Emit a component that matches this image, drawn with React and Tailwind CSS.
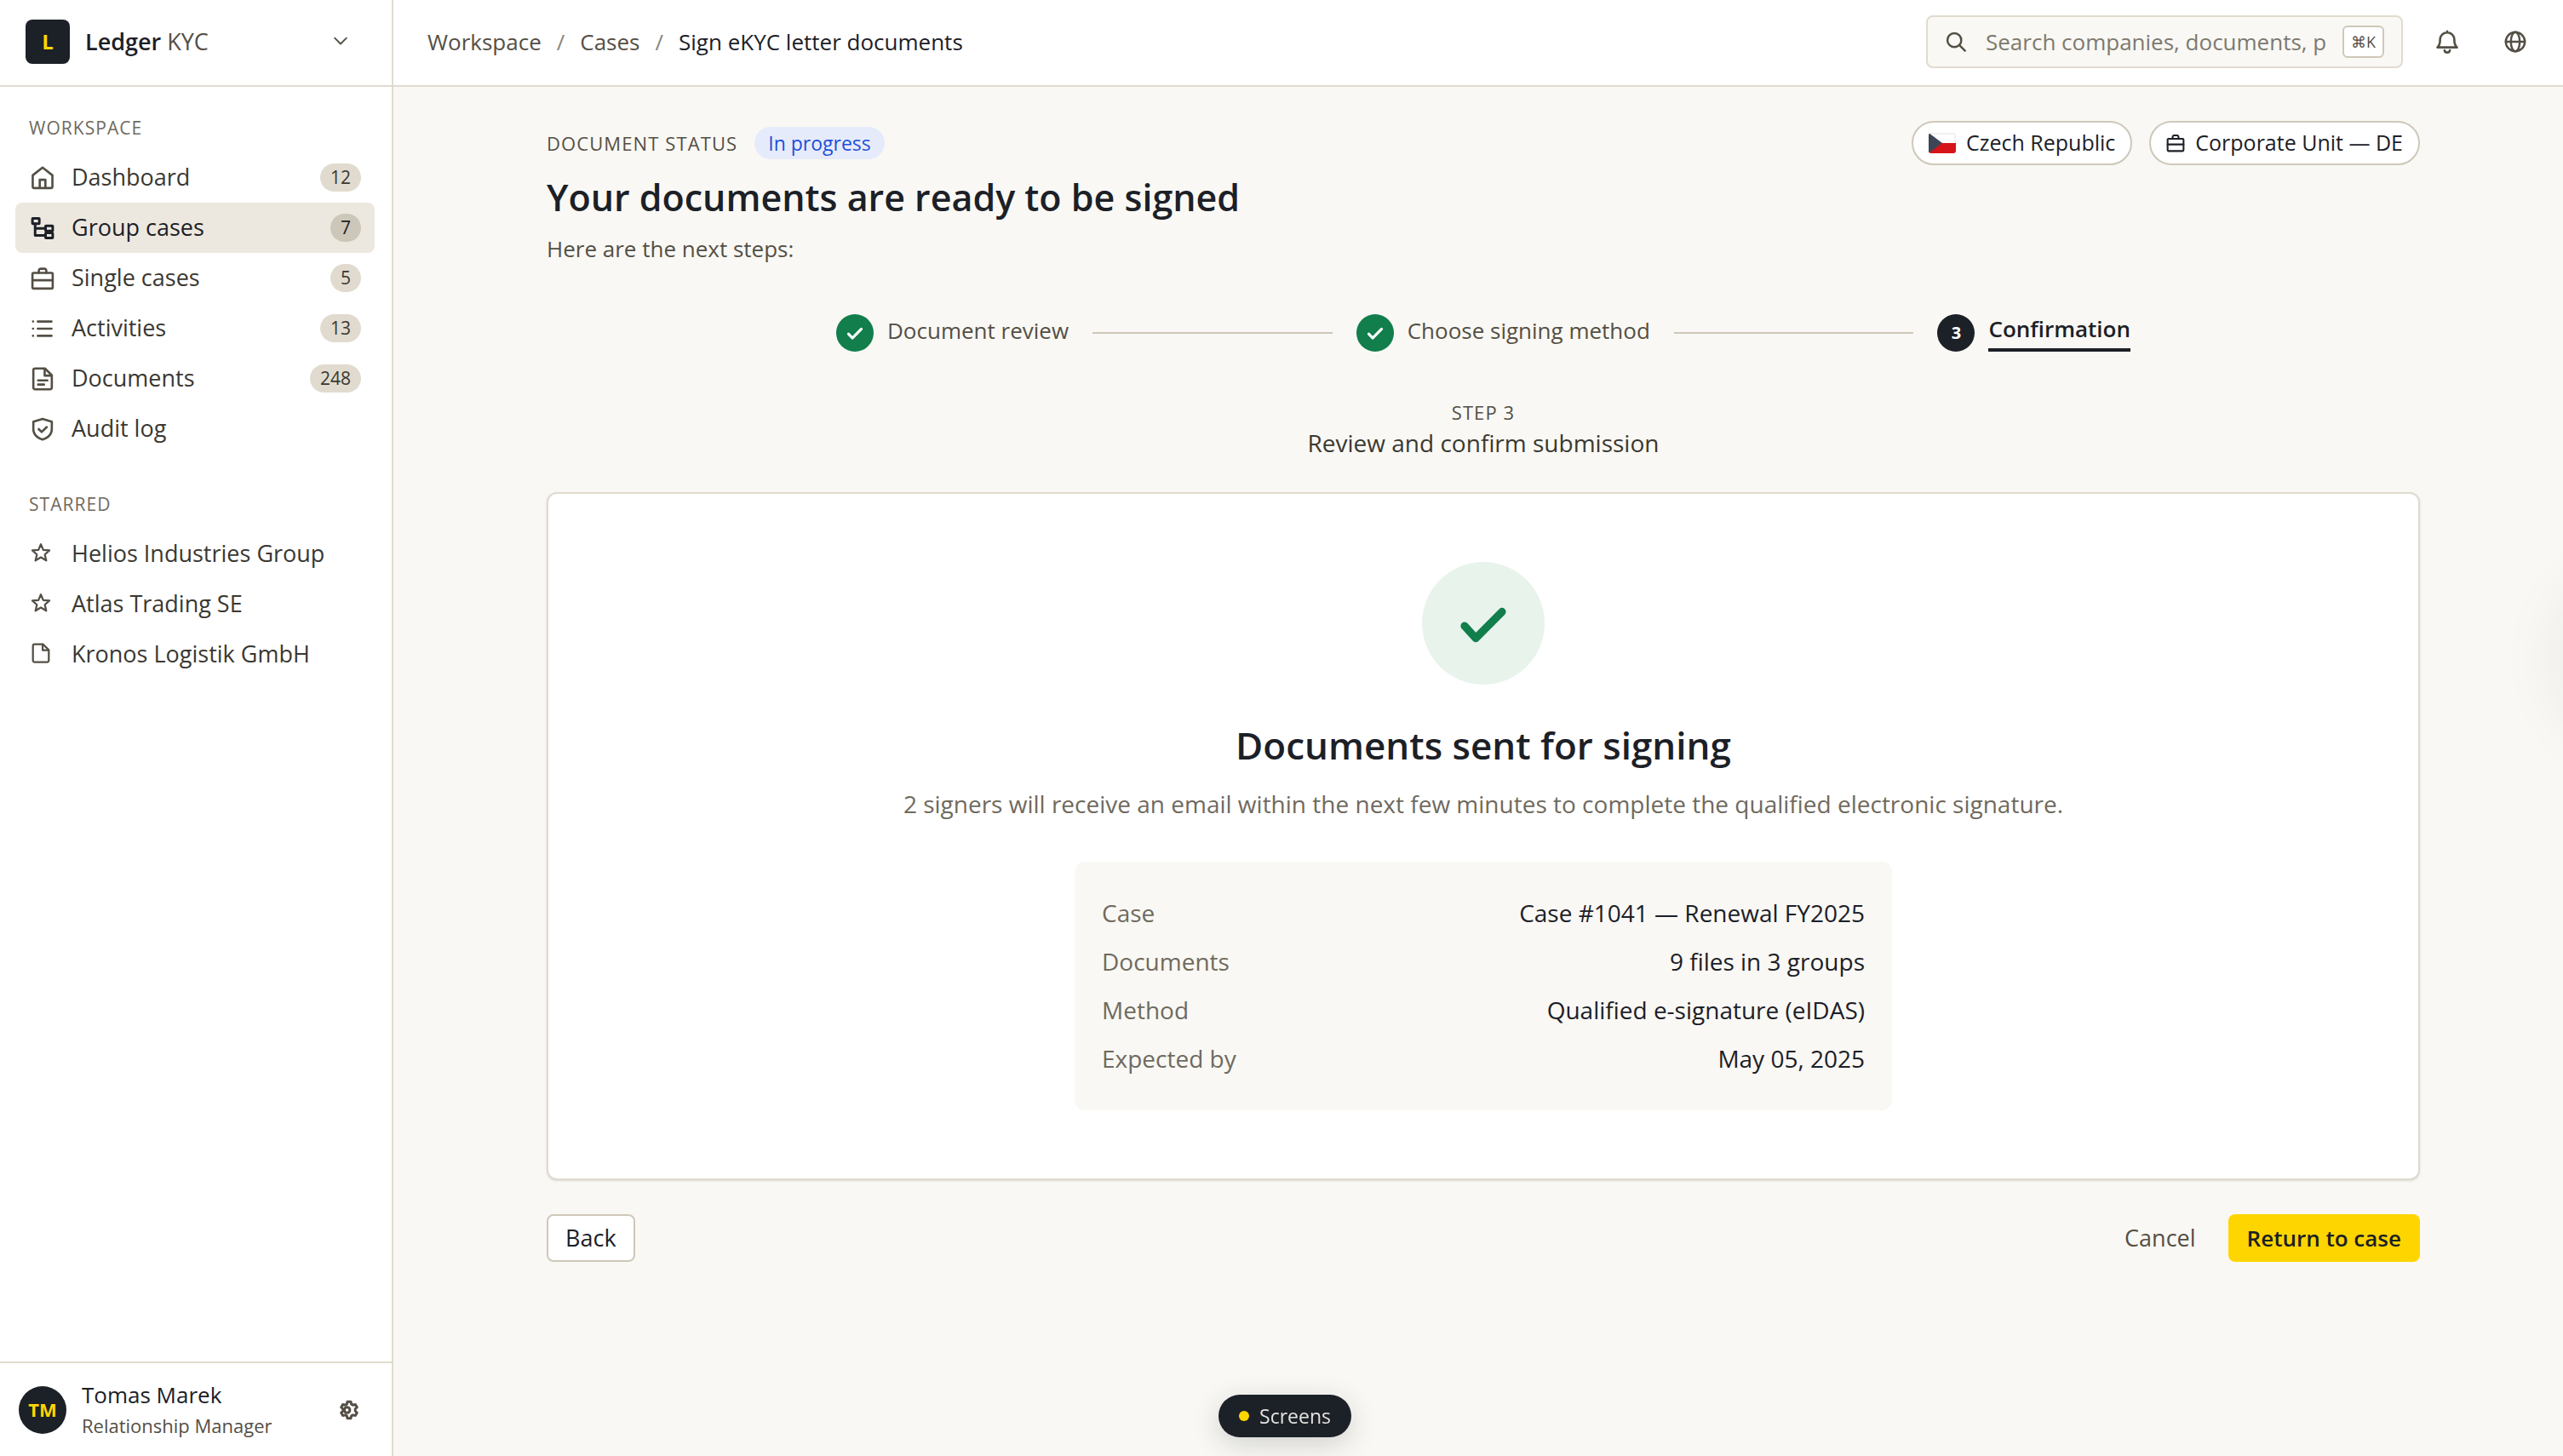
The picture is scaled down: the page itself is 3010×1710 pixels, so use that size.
import { Fragment } from 'react';

const workspaceLinks = [
  { label: 'Dashboard', icon: HomeIcon, count: 12 },
  { label: 'Group cases', icon: TreeIcon, count: 7, active: true },
  { label: 'Single cases', icon: BriefcaseIcon, count: 5 },
  { label: 'Activities', icon: ListIcon, count: 13 },
  { label: 'Documents', icon: DocumentIcon, count: 248 },
  { label: 'Audit log', icon: ShieldIcon },
];

const starredLinks = [
  { label: 'Helios Industries Group', icon: StarIcon },
  { label: 'Atlas Trading SE', icon: StarIcon },
  { label: 'Kronos Logistik GmbH', icon: FileIcon },
];

const steps = [
  { label: 'Document review', done: true },
  { label: 'Choose signing method', done: true },
  { label: 'Confirmation', current: true },
];

const summary = [
  ['Case', 'Case #1041 — Renewal FY2025'],
  ['Documents', '9 files in 3 groups'],
  ['Method', 'Qualified e-signature (eIDAS)'],
  ['Expected by', 'May 05, 2025'],
];

function Icon({ className = 'size-7', strokeWidth = 1.5, children }) {
  return (
    <svg
      viewBox="0 0 16 16"
      fill="none"
      stroke="currentColor"
      strokeWidth={strokeWidth}
      strokeLinecap="round"
      strokeLinejoin="round"
      aria-hidden="true"
      className={`shrink-0 ${className}`}
    >
      {children}
    </svg>
  );
}

function HomeIcon(props) {
  return (
    <Icon {...props}>
      <path d="M1.4 6.2 8 1l6.6 5.2v7.600a1 1 0 0 1-1 1H2.400a1 1 0 0 1-1-1z" />
      <path d="M6.100 14.600V9.200h3.800v5.400" />
    </Icon>
  );
}

function TreeIcon(props) {
  return (
    <Icon strokeWidth={1.7} {...props}>
      <rect x="1.200" y="1.400" width="4.600" height="3.600" rx=".3" />
      <rect x="10" y="6.400" width="4.800" height="3.400" rx=".3" />
      <rect x="10" y="11.200" width="4.800" height="3.400" rx=".3" />
      <path d="M3 5v7.900h7M3 8.200h7" />
    </Icon>
  );
}

function BriefcaseIcon(props) {
  return (
    <Icon {...props}>
      <rect x="1.200" y="4.300" width="13.600" height="10.500" rx=".8" />
      <path d="M5.500 4.300V2.800a1.300 1.300 0 0 1 1.300-1.300h2.400a1.300 1.300 0 0 1 1.300 1.300v1.500M1.200 9.200h13.600" />
    </Icon>
  );
}

function ListIcon(props) {
  return (
    <Icon {...props}>
      <path d="M4.800 3.200h9.200M4.800 8h9.200M4.800 12.800h9.200M1.600 3.200h.01M1.600 8h.01M1.600 12.800h.01" />
    </Icon>
  );
}

function FileIcon(props) {
  return (
    <Icon {...props}>
      <path d="M9.600 1H3a1.200 1.200 0 0 0-1.200 1.200v11.600A1.200 1.200 0 0 0 3 15h10a1.200 1.200 0 0 0 1.200-1.200V5.600z" />
      <path d="M9.400 1.200v4.600h4.600" />
    </Icon>
  );
}

function DocumentIcon(props) {
  return (
    <Icon {...props}>
      <path d="M9.600 1H3a1.200 1.200 0 0 0-1.200 1.200v11.600A1.200 1.200 0 0 0 3 15h10a1.200 1.200 0 0 0 1.200-1.200V5.600z" />
      <path d="M9.400 1.200v4.600h4.600M5 9h6.200M5 11.800h4" />
    </Icon>
  );
}

function ShieldIcon(props) {
  return (
    <Icon {...props}>
      <path d="M8 1.100 14.200 3v5c0 3.400-2.600 5.800-6.200 7-3.600-1.200-6.200-3.600-6.200-7V3z" />
      <path d="m5.400 8 2 1.900 3.400-3.300" />
    </Icon>
  );
}

function StarIcon(props) {
  return (
    <Icon {...props}>
      <path d="m8 1.500 1.900 4.400 4.800.4-3.600 3.200 1.100 4.700L8 11.700l-4.200 2.500 1.100-4.700L1.300 6.300l4.800-.4z" />
    </Icon>
  );
}

function SearchIcon(props) {
  return (
    <Icon {...props}>
      <circle cx="6.900" cy="6.900" r="5" />
      <path d="m10.600 10.600 4 4" />
    </Icon>
  );
}

function BellIcon(props) {
  return (
    <Icon {...props}>
      <path d="M8 1v.8M1.400 11.800h13.200c-1.200-1.100-1.800-2.300-1.800-4.600V6.600a4.800 4.800 0 0 0-9.600 0v.6c0 2.300-.6 3.500-1.800 4.600z" />
      <path d="M6.200 13.800c.2 1 .9 1.400 1.800 1.400s1.600-.4 1.800-1.400" />
    </Icon>
  );
}

function GlobeIcon(props) {
  return (
    <Icon {...props}>
      <circle cx="8" cy="8" r="6.900" />
      <ellipse cx="8" cy="8" rx="3.200" ry="6.900" />
      <path d="M1.200 8h13.600" />
    </Icon>
  );
}

function GearIcon(props) {
  return (
    <Icon strokeWidth={2} {...props}>
      <path d="M6.700 1.500h2.600l.5 1.900 1.200.7 1.900-.5 1.300 2.200-1.400 1.400v1.600l1.400 1.400-1.300 2.200-1.900-.5-1.200.7-.5 1.900H6.700l-.5-1.900-1.200-.7-1.900.5-1.300-2.200 1.400-1.400V7.200L1.800 5.800l1.300-2.200 1.900.5 1.200-.7z" />
      <circle cx="6.400" cy="8" r="2.200" />
    </Icon>
  );
}

function CheckIcon(props) {
  return (
    <Icon strokeWidth={2.300} {...props}>
      <path d="m2.500 8.800 3.300 3.600L13.500 4.600" />
    </Icon>
  );
}

function ChevronIcon(props) {
  return (
    <Icon {...props}>
      <path d="m2.500 4.500 5.500 5.500 5.500-5.500" />
    </Icon>
  );
}

function CzechFlag() {
  return (
    <svg viewBox="0 0 32 24" className="h-6 w-8 shrink-0 rounded-[3px]" aria-hidden="true">
      <path fill="#f1f1f1" d="M0 0h32v12H0z" />
      <path fill="#fff" d="M2 2h28v10H2z" />
      <path fill="#d7141a" d="M0 12h32v12H0z" />
      <path fill="#3d4657" d="m0 0 16 12L0 24z" />
    </svg>
  );
}

function NavItem({ item, small }) {
  const ItemIcon = item.icon;
  return (
    <li>
      <a
        href="#"
        className={`flex h-[59px] items-center gap-5 rounded-lg pr-4 pl-[18px] text-[27px] font-medium ${
          item.active ? 'bg-[#ede8df] text-[#1c2027]' : 'text-[#3a3832]'
        }`}
      >
        <span className={`flex w-7 ${item.active ? '' : 'text-[#544f45]'} ${small ? 'pb-1' : ''}`}>
          <ItemIcon className={small ? 'size-6' : 'size-7'} />
        </span>
        <span className="flex-1 whitespace-nowrap">{item.label}</span>
        {item.count && (
          <span
            className={`rounded-full px-3 text-[21px] leading-[33px] ${
              item.active ? 'bg-[#cdc7b9] text-[#1c2027]' : 'bg-[#e1dbcf] text-[#3a3832]'
            }`}
          >
            {item.count}
          </span>
        )}
      </a>
    </li>
  );
}

function NavSection({ title, items, small }) {
  return (
    <section>
      <h2 className="px-4 pb-3 text-[21px] leading-[34px] font-medium tracking-wider text-[#6f6a5e] uppercase">{title}</h2>
      <ul>
        {items.map((item) => (
          <NavItem key={item.label} item={item} small={small} />
        ))}
      </ul>
    </section>
  );
}

function Sidebar() {
  return (
    <aside className="flex w-[462px] shrink-0 flex-col border-r-2 border-[#e1dbcf] bg-white">
      <button type="button" className="flex h-[102px] items-center border-b-2 border-[#e1dbcf] pr-[50px] pb-0.5 pl-[30px] text-left">
        <span className="flex size-[52px] items-center justify-center rounded-lg bg-[#1c2027] text-[24px] font-bold text-[#ffd500]">
          L
        </span>
        <span className="ml-[18px] flex-1 text-[27px] font-semibold text-[#1c2027]">
          Ledger <span className="font-normal text-[#544f45]">KYC</span>
        </span>
        <ChevronIcon className="size-5 text-[#544f45]" />
      </button>
      <nav className="flex flex-1 flex-col gap-[42px] pt-[31px] pr-5 pl-[18px]">
        <NavSection title="Workspace" items={workspaceLinks} />
        <NavSection title="Starred" items={starredLinks} small />
      </nav>
      <div className="flex h-[111px] items-center border-t-2 border-[#e1dbcf] pr-[38px] pl-[22px]">
        <span className="flex size-14 items-center justify-center rounded-full bg-[#1c2027] text-[22px] font-bold text-[#ffd500]">
          TM
        </span>
        <div className="ml-[18px] flex-1">
          <p className="text-[26px] leading-9 font-medium text-[#1c2027]">Tomas Marek</p>
          <p className="text-[22px] leading-9 text-[#544f45]">Relationship Manager</p>
        </div>
        <button type="button" aria-label="Settings" className="text-[#544f45]">
          <GearIcon className="size-6" />
        </button>
      </div>
    </aside>
  );
}

function TopBar() {
  return (
    <header className="flex h-[102px] items-center gap-5 border-b-2 border-[#e1dbcf] bg-white pr-6 pb-0.5 pl-10">
      <nav aria-label="Breadcrumb" className="flex flex-1 gap-[18px] text-[26px] text-[#544f45]">
        <a href="#">Workspace</a>
        <span className="text-[#8a857a]">/</span>
        <a href="#">Cases</a>
        <span className="text-[#8a857a]">/</span>
        <span className="font-medium text-[#1c2027]">Sign eKYC letter documents</span>
      </nav>
      <label className="flex h-[62px] w-[560px] items-center rounded-lg border-2 border-[#e1dbcf] bg-[#f9f8f4] px-5">
        <SearchIcon className="size-[26px] text-[#544f45]" />
        <input
          type="text"
          aria-label="Search"
          placeholder="Search companies, documents, people"
          className="mr-5 ml-[22px] min-w-0 flex-1 text-[26px] outline-none placeholder:text-[#7d7970]"
        />
        <kbd className="rounded-md border-2 border-[#cfc8ba] bg-white px-2 font-[inherit] text-[18px] leading-[34px] text-[#544f45]">⌘K</kbd>
      </label>
      <div className="flex gap-4 text-[#544f45]">
        <button type="button" aria-label="Notifications" className="flex size-16 items-center justify-center">
          <BellIcon className="size-7" />
        </button>
        <button type="button" aria-label="Language" className="flex size-16 items-center justify-center">
          <GlobeIcon className="size-[26px]" />
        </button>
      </div>
    </header>
  );
}

function Pill({ children }) {
  return (
    <span className="flex h-[52px] items-center gap-3 rounded-full border-2 border-[#cfc8ba] bg-white px-[18px] text-[25px] font-medium whitespace-nowrap text-[#1c2027]">
      {children}
    </span>
  );
}

function Stepper() {
  return (
    <ol className="mx-auto flex w-full max-w-[1520px] items-center gap-7">
      {steps.map((step, i) => (
        <Fragment key={step.label}>
          {i > 0 && <li aria-hidden="true" className="h-0.5 flex-1 bg-[#cfc8ba]" />}
          <li className="flex h-11 items-center gap-4">
            <span
              className={`flex size-11 items-center justify-center rounded-full text-[20px] font-bold text-white ${
                step.done ? 'bg-[#117e4c]' : 'bg-[#1c2027]'
              }`}
            >
              {step.done ? <CheckIcon className="size-[22px]" /> : i + 1}
            </span>
            <span
              className={`text-[26px] leading-[34px] whitespace-nowrap ${
                step.current
                  ? 'border-b-4 border-[#1c2027] pb-1.5 font-semibold text-[#1c2027]'
                  : 'pb-1.5 text-[#544f45]'
              }`}
            >
              {step.label}
            </span>
          </li>
        </Fragment>
      ))}
    </ol>
  );
}

export default function App() {
  return (
    <div className="flex min-h-screen bg-[#f9f8f4] font-['Open_Sans',sans-serif] text-[#1c2027]">
      <Sidebar />
      <div className="flex min-w-0 flex-1 flex-col">
        <TopBar />
        <main className="pt-10 pl-3">
          <div className="mx-auto max-w-[2200px]">
            <div className="flex items-center gap-5">
              <p className="text-[22px] font-medium tracking-wider text-[#544f45] uppercase">Document status</p>
              <span className="rounded-full bg-[#e6ebfb] px-4 text-[23px] leading-[38px] font-medium text-[#1f4fd8]">
                In progress
              </span>
              <div className="ml-auto flex gap-5">
                <Pill>
                  <CzechFlag />
                  Czech Republic
                </Pill>
                <Pill>
                  <BriefcaseIcon className="size-[22px]" />
                  Corporate Unit — DE
                </Pill>
              </div>
            </div>
            <h1 className="mt-2.5 text-[43px] leading-[56px] font-semibold">Your documents are ready to be signed</h1>
            <p className="mt-3 mb-[57px] text-[26px] leading-10 text-[#544f45]">Here are the next steps:</p>
            <Stepper />
            <div className="mt-[53px] mb-10 text-center">
              <p className="text-[22px] leading-9 font-medium tracking-wider text-[#544f45] uppercase">Step 3</p>
              <p className="text-[28px] leading-9 text-[#3a3832]">Review and confirm submission</p>
            </div>

            <section className="flex flex-col items-center rounded-xl border-2 border-[#e1dbcf] bg-white py-20 shadow-sm">
              <span className="flex size-36 items-center justify-center rounded-full bg-[#e8f3ec] text-[#117e4c]">
                <CheckIcon className="size-16" />
              </span>
              <h2 className="mt-[41px] text-[44px] leading-[60px] font-semibold">Documents sent for signing</h2>
              <p className="mt-[19px] text-[28px] leading-10 text-[#6f6a5e]">
                2 signers will receive an email within the next few minutes to complete the qualified electronic signature.
              </p>
              <dl className="mt-12 w-full max-w-[960px] rounded-xl bg-[#f9f8f4] p-8 text-[28px] leading-[41px]">
                {summary.map(([term, value]) => (
                  <div key={term} className="flex justify-between py-2">
                    <dt className="text-[#6f6a5e]">{term}</dt>
                    <dd className="font-medium">{value}</dd>
                  </div>
                ))}
              </dl>
            </section>

            <div className="mt-10 flex items-center gap-4">
              <button type="button" className="h-14 rounded-lg border-2 border-[#cfc8ba] bg-white px-5 text-[27px] font-medium">
                Back
              </button>
              <button type="button" className="ml-auto h-14 px-[22px] text-[27px] font-medium text-[#544f45]">
                Cancel
              </button>
              <button type="button" className="h-14 rounded-lg bg-[#ffd500] px-[22px] text-[26px] font-semibold">
                Return to case
              </button>
            </div>
          </div>
        </main>
      </div>

      <div className="pointer-events-none fixed inset-x-0 bottom-[22px] flex justify-center pl-2">
        <button
          type="button"
          className="pointer-events-auto flex h-[50px] items-center gap-3 rounded-full bg-[#1c2027] px-6 text-[23px] text-[#e4e2dd] shadow-[0_8px_32px_rgba(28,32,39,0.18)]"
        >
          <span className="size-3 rounded-full bg-[#ffd500]" />
          Screens
        </button>
      </div>
      <div className="pointer-events-none fixed top-[683px] left-full h-[180px] w-40 rounded-full shadow-[0_0_80px_rgba(28,32,39,0.08)]" />
    </div>
  );
}
